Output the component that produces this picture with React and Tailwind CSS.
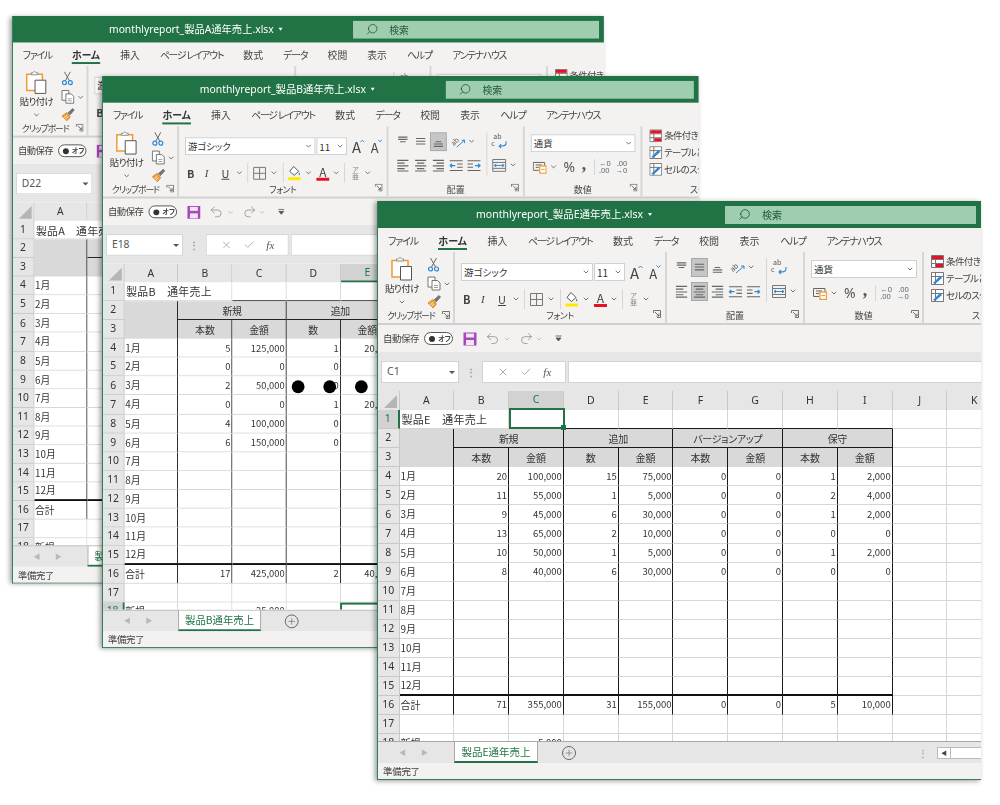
import { Search, Undo2, Redo2, X, Check, Plus, ChevronDown } from 'lucide-react';

const ribbonTabs = [
  { label: 'ファイル', cls: 'tracking-[-1.200px]' },
  { label: 'ホーム', cls: 'font-bold text-[#333]' },
  { label: '挿入', cls: '' },
  { label: 'ページ レイアウト', cls: 'tracking-[-1.200px]' },
  { label: '数式', cls: '' },
  { label: 'データ', cls: 'tracking-[-1px]' },
  { label: '校閲', cls: '' },
  { label: '表示', cls: '' },
  { label: 'ヘルプ', cls: 'tracking-[-1px]' },
  { label: 'アンテナハウス', cls: 'tracking-[-1.300px]' },
];
const columns = ['A', 'B', 'C', 'D', 'E', 'F', 'G', 'H', 'I', 'J', 'K'];
const months = ['1月', '2月', '3月', '4月', '5月', '6月', '7月', '8月', '9月', '10月', '11月', '12月'];

const sheetA = { title: '製品A　通年売上', rows: [], total: [], extra: [] };

const sheetB = {
  title: '製品B　通年売上',
  rows: [
    ['5', '125,000', '1', '20,000'],
    ['0', '0', '0', '0'],
    ['2', '50,000', '0', '0'],
    ['0', '0', '1', '20,000'],
    ['4', '100,000', '0', '0'],
    ['6', '150,000', '0', '0'],
  ],
  total: ['17', '425,000', '2', '40,000'],
  extra: ['', '25,000'],
};

const sheetE = {
  title: '製品E　通年売上',
  rows: [
    ['20', '100,000', '15', '75,000', '0', '0', '1', '2,000'],
    ['11', '55,000', '1', '5,000', '0', '0', '2', '4,000'],
    ['9', '45,000', '6', '30,000', '0', '0', '1', '2,000'],
    ['13', '65,000', '2', '10,000', '0', '0', '0', '0'],
    ['10', '50,000', '1', '5,000', '0', '0', '1', '2,000'],
    ['8', '40,000', '6', '30,000', '0', '0', '0', '0'],
  ],
  total: ['71', '355,000', '31', '155,000', '0', '0', '5', '10,000'],
  extra: ['', '5,000'],
};

function Chev({ className = 'mx-[3px]' }) {
  return <ChevronDown size={8} strokeWidth={2.4} className={`shrink-0 text-[#555] ${className}`} />;
}

function Launcher() {
  return (
    <svg width="8" height="8" viewBox="0 0 8 8" className="shrink-0">
      <path d="M.5 3V.5H7.5V7.5H4M2 2L6 6M6 3.5V6H3.5" fill="none" stroke="#666" strokeWidth=".9" />
    </svg>
  );
}

function Lines({ kind }) {
  const paths = {
    top: 'M3 3h10M3 5.500h10M5 8h6',
    middle: 'M3 4.500h10M3 7.500h10M3 10.500h10',
    bottom: 'M5 8h6M3 10.500h10M3 13h10',
    left: 'M2 2.500h12M2 5.500h8M2 8.500h12M2 11.500h8M2 14h12',
    center: 'M2 2.500h12M4 5.500h8M2 8.500h12M4 11.500h8M2 14h12',
    right: 'M2 2.500h12M6 5.500h8M2 8.500h12M6 11.500h8M2 14h12',
  };
  return (
    <svg width="15" height="15" viewBox="0 0 16 16" className="shrink-0">
      <path d={paths[kind]} stroke="#666" strokeWidth="1.200" fill="none" />
    </svg>
  );
}

function Indent({ flip }) {
  return (
    <svg width="15" height="15" viewBox="0 0 16 16" className={`shrink-0 ${flip ? '-scale-x-100' : ''}`}>
      <path d="M1 3h14M9 6.500h6M9 10h6M1 13.500h14" stroke="#666" strokeWidth="1.100" fill="none" />
      <path d="M7 8.200H1.500M3.500 6.200L1.500 8.200L3.500 10.200" stroke="#1f8fd8" strokeWidth="1.300" fill="none" />
    </svg>
  );
}

function AlignSlot({ on, kind }) {
  return (
    <span className={`flex h-[17px] w-[15px] items-center justify-center ${on ? 'bg-[#c6c6c6] ring-1 ring-[#a8a8a8]' : ''}`}>
      <Lines kind={kind} />
    </span>
  );
}

function Clipboard() {
  return (
    <svg width="24" height="24" viewBox="0 0 24 24" className="shrink-0">
      <path d="M2 3.500H18V20H2Z" fill="#fff" stroke="#ed9b33" strokeWidth="1.500" />
      <path d="M6.500 4V2H8.500C9 0 11 0 11.500 2H13.500V4Z" fill="#fff" stroke="#888" strokeWidth=".9" />
      <path d="M10.500 9.500H21.500V23H10.500Z" fill="#fff" stroke="#555" strokeWidth="1" />
    </svg>
  );
}

function Scissors() {
  return (
    <svg width="13" height="15" viewBox="0 0 13 15" className="shrink-0">
      <path d="M3.500 1L8.500 10M9.500 1L4.500 10" stroke="#666" strokeWidth="1" fill="none" />
      <circle cx="3.500" cy="12" r="2" fill="none" stroke="#2b88d8" strokeWidth="1.200" />
      <circle cx="9.500" cy="12" r="2" fill="none" stroke="#2b88d8" strokeWidth="1.200" />
    </svg>
  );
}

function CopyIcon() {
  return (
    <svg width="14" height="15" viewBox="0 0 14 15" className="shrink-0">
      <path d="M1 1H8V11H1Z" fill="#fff" stroke="#666" strokeWidth=".9" />
      <path d="M5 4.500H10.500L13 7V14H5Z" fill="#fff" stroke="#666" strokeWidth=".9" />
      <path d="M7 9.500H11M7 11.500H11" stroke="#888" strokeWidth=".8" />
    </svg>
  );
}

function Brush() {
  return (
    <svg width="15" height="15" viewBox="0 0 15 15" className="shrink-0">
      <path d="M1 9L6 5.500L9.500 10L6 14Z" fill="#f0a33c" stroke="#c9791b" strokeWidth=".7" />
      <path d="M7 6L12 1.500L13.500 3L9 8" fill="#777" stroke="#555" strokeWidth=".7" />
      <path d="M3 11L6 8.500M4.500 12.500L7 10" stroke="#fff" strokeWidth=".7" />
    </svg>
  );
}

function Borders() {
  return (
    <svg width="15" height="15" viewBox="0 0 15 15" className="shrink-0">
      <path d="M1.500 1.500H13.500V13.500H1.500ZM7.500 1.500V13.500M1.500 7.500H13.500" fill="none" stroke="#777" strokeWidth="1" />
    </svg>
  );
}

function FillColor() {
  return (
    <svg width="15" height="16" viewBox="0 0 15 16" className="shrink-0">
      <path d="M7 1.500L12 6.500L7.500 10.500L3 6.500Z" fill="#fff" stroke="#555" strokeWidth="1" />
      <path d="M12.500 7.500C13.500 9 13.800 10 12.700 10.500C11.600 10 11.800 9 12.500 7.500Z" fill="#2b88d8" />
      <rect x="1.500" y="12.500" width="12.500" height="3" fill="#ffe900" />
    </svg>
  );
}

function SmallSep({ className = 'mx-[3px]' }) {
  return <span className={`h-[20px] w-px shrink-0 bg-[#d6d6d6] ${className}`} />;
}

function Grow({ shrink }) {
  return (
    <span className="relative inline-block text-[15px] leading-none text-[#444]">
      <span className={shrink ? 'text-[13px]' : ''}>A</span>
      <svg width="5" height="4" viewBox="0 0 5 4" className="absolute -right-[4px] top-0">
        <path d={shrink ? 'M.5 .5L2.500 2.500L4.500 .5' : 'M.5 3L2.500 1L4.500 3'} stroke="#2b88d8" fill="none" />
      </svg>
    </span>
  );
}

function ClipboardGroup() {
  return (
    <div className="flex w-[77px] shrink-0 flex-col border-r-2 border-[#d6d6d6]">
      <div className="flex flex-1">
        <div className="flex w-[45px] flex-col items-center pl-[3px] pt-[5px]">
          <Clipboard />
          <span className="mt-[1px] whitespace-nowrap text-[9.500px] leading-[13px] tracking-[-.5px] text-[#333]">貼り付け</span>
          <Chev className="mt-[3px]" />
        </div>
        <div className="flex flex-col pl-[4px] pt-[5px]">
          <Scissors />
          <div className="mt-[4px] flex items-center">
            <CopyIcon />
            <Chev className="ml-[2px]" />
          </div>
          <div className="mt-[3px]">
            <Brush />
          </div>
        </div>
      </div>
      <div className="flex h-[14px] items-center pb-[2px] pl-[9px] pr-[3px]">
        <span className="flex-1 whitespace-nowrap text-[9px] leading-none tracking-[-1.100px] text-[#444]">クリップボード</span>
        <Launcher />
      </div>
    </div>
  );
}

function FontGroup() {
  return (
    <div className="flex w-[212px] shrink-0 flex-col border-r-2 border-[#d6d6d6]">
      <div className="flex flex-1 flex-col pl-[6px] pt-[8px]">
        <div className="flex items-center">
          <div className="flex h-[18px] w-[132px] items-center justify-between border border-[#d0d0d0] bg-white pl-[2px] pr-[2px] text-[9.500px] text-[#333]">
            游ゴシック
            <Chev className="" />
          </div>
          <div className="ml-[1px] flex h-[18px] w-[31px] items-center justify-between border border-[#d0d0d0] bg-white pl-[2px] pr-[2px] text-[10px] text-[#333]">
            11
            <Chev className="" />
          </div>
          <span className="ml-[5px]">
            <Grow />
          </span>
          <span className="ml-[10px]">
            <Grow shrink />
          </span>
        </div>
        <div className="mt-[6px] flex h-[18px] items-center text-[11px] text-[#444]">
          <span className="ml-[2px] w-[18px] font-bold">B</span>
          <span className="w-[17px] font-['Liberation_Serif',serif] italic">I</span>
          <span className="w-[12px] underline">U</span>
          <Chev className="ml-[2px]" />
          <SmallSep className="mx-[4px]" />
          <Borders />
          <Chev className="ml-[3px] mr-[2px]" />
          <SmallSep className="mx-[3px]" />
          <FillColor />
          <Chev className="ml-[3px]" />
          <span className="ml-[4px] flex h-[16px] w-[13px] flex-col items-center text-[12px] leading-[13px]">
            A
            <span className="h-[3px] w-[13px] bg-[#e81123]" />
          </span>
          <Chev className="ml-[3px]" />
          <SmallSep className="mx-[4px]" />
          <span className="ml-[3px] flex flex-col items-center text-[7px] leading-[7px] text-[#888]">
            <span>ア</span>
            <span>亜</span>
          </span>
          <Chev className="ml-[5px]" />
        </div>
      </div>
      <div className="relative flex h-[14px] items-center justify-center pb-[2px]">
        <span className="text-[9px] leading-none tracking-[-.5px] text-[#444]">フォント</span>
        <span className="absolute right-[4px] top-[1px]">
          <Launcher />
        </span>
      </div>
    </div>
  );
}

function AlignGroup({ sel }) {
  return (
    <div className="flex w-[138px] shrink-0 flex-col border-r-2 border-[#d6d6d6]">
      <div className="flex flex-1 pl-[7px] pt-[6px]">
        <div className="flex w-[87px] shrink-0 flex-col gap-[6px]">
          <div className="flex h-[18px] items-center gap-[3px]">
            <AlignSlot kind="top" />
            <AlignSlot kind="middle" on={sel === 'middle-center'} />
            <AlignSlot kind="bottom" on={sel === 'bottom'} />
            <span className="relative ml-[2px] flex h-[14px] w-[14px] shrink-0 items-center">
              <span className="-rotate-45 text-[7px] leading-none text-[#555]">ab</span>
              <svg width="10" height="10" viewBox="0 0 10 10" className="absolute bottom-0 left-[5px]">
                <path d="M1 9L9 2M6 2H9V5" stroke="#2b88d8" fill="none" />
              </svg>
            </span>
            <Chev className="" />
          </div>
          <div className="flex h-[18px] items-center gap-[3px]">
            <AlignSlot kind="left" />
            <AlignSlot kind="center" on={sel === 'middle-center'} />
            <AlignSlot kind="right" />
            <Indent />
            <Indent flip />
          </div>
        </div>
        <span className="ml-[5px] h-[44px] w-px bg-[#d6d6d6]" />
        <div className="ml-[4px] flex flex-col gap-[6px]">
          <div className="flex h-[18px] items-center">
            <span className="relative flex h-[16px] w-[16px] shrink-0 flex-col text-[7px] leading-[7px] text-[#555]">
              <span className="pl-[2px]">ab</span>
              <span>c</span>
              <svg width="10" height="8" viewBox="0 0 10 8" className="absolute bottom-0 right-0">
                <path d="M9 0V2C9 5 6 5 2 5M4 3L2 5L4 7" stroke="#2b88d8" strokeWidth="1.100" fill="none" />
              </svg>
            </span>
          </div>
          <div className="flex h-[18px] items-center">
            <svg width="16" height="15" viewBox="0 0 16 15" className="shrink-0">
              <path d="M1.500 1.500H14.500V13.500H1.500ZM1.500 4.500H14.500M1.500 10.500H14.500" fill="none" stroke="#777" />
              <path d="M3 7.500H13M5 6L3 7.500L5 9M11 6L13 7.500L11 9" stroke="#2b88d8" fill="none" />
            </svg>
            <Chev className="ml-[2px]" />
          </div>
        </div>
      </div>
      <div className="relative flex h-[14px] items-center justify-center pb-[2px]">
        <span className="text-[9px] leading-none text-[#444]">配置</span>
        <span className="absolute right-[4px] top-[1px]">
          <Launcher />
        </span>
      </div>
    </div>
  );
}

function NumberGroup() {
  return (
    <div className="flex w-[119px] shrink-0 flex-col border-r-2 border-[#d6d6d6]">
      <div className="flex flex-1 flex-col pl-[6px] pt-[8px]">
        <div className="flex h-[18px] w-[106px] items-center justify-between border border-[#d0d0d0] bg-white px-[2px] text-[9.500px] text-[#333]">
          通貨
          <Chev className="" />
        </div>
        <div className="mt-[6px] flex h-[18px] items-center text-[#555]">
          <svg width="14" height="14" viewBox="0 0 14 14" className="ml-[2px] shrink-0">
            <path d="M.5 2.500H12V6M.5 2.500V10.500H6M3 5H9M3 7.500H6" stroke="#666" fill="none" />
            <rect x="7" y="6" width="6.500" height="7.500" fill="#fff" stroke="#ed9b33" strokeWidth="1.300" />
            <path d="M8.500 9.500H12" stroke="#ed9b33" />
          </svg>
          <Chev className="ml-[3px]" />
          <span className="ml-[6px] font-['Noto_Sans',sans-serif] text-[14px] leading-none">%</span>
          <span className="ml-[7px] h-[14px] font-['Liberation_Serif',serif] text-[18px] font-bold leading-[8px]">,</span>
          <span className="ml-[8px] h-[16px] w-px bg-[#d6d6d6]" />
          <span className="ml-[4px] flex flex-col font-['Noto_Sans',sans-serif] text-[7.500px] leading-[7px] text-[#666]">
            <span>
              <span className="text-[#2b88d8]">←</span>0
            </span>
            <span>.00</span>
          </span>
          <span className="ml-[5px] flex flex-col text-right font-['Noto_Sans',sans-serif] text-[7.500px] leading-[7px] text-[#666]">
            <span>.00</span>
            <span>
              <span className="text-[#2b88d8]">→</span>0
            </span>
          </span>
        </div>
      </div>
      <div className="relative flex h-[14px] items-center justify-center pb-[2px]">
        <span className="text-[9px] leading-none text-[#444]">数値</span>
        <span className="absolute right-[3px] top-[1px]">
          <Launcher />
        </span>
      </div>
    </div>
  );
}

function StyleIcon({ kind }) {
  if (kind === 0) {
    return (
      <svg width="13" height="13" viewBox="0 0 13 13" className="shrink-0">
        <path d="M.5 .5H12.500V12.500H.5ZM.5 4.500H12.500M.5 8.500H12.500M4.500 .5V12.500" fill="#fff" stroke="#777" />
        <rect x="1" y="1" width="11" height="3" fill="#e81123" />
        <rect x="5" y="9" width="7" height="3" fill="#e81123" />
      </svg>
    );
  }
  return (
    <svg width="13" height="13" viewBox="0 0 13 13" className="shrink-0">
      <path d="M.5 .5H12.500V12.500H.5ZM.5 4.500H12.500M4.500 .5V12.500" fill="#fff" stroke="#777" />
      <path d="M2 11L9 4L11 6L4 12Z" fill="#2b88d8" />
    </svg>
  );
}

function StylesGroup() {
  return (
    <div className="flex min-w-0 flex-1 flex-col overflow-hidden">
      <div className="flex flex-1 flex-col gap-[4px] whitespace-nowrap pl-[7px] pt-[3px] text-[9.500px] leading-[13px] tracking-[-.6px] text-[#444]">
        <div className="flex items-center gap-[2px]">
          <StyleIcon kind={0} />
          条件付き書式
        </div>
        <div className="flex items-center gap-[2px]">
          <StyleIcon kind={1} />
          テーブルとして書式設定
        </div>
        <div className="flex items-center gap-[2px]">
          <StyleIcon kind={2} />
          セルのスタイル
        </div>
      </div>
      <div className="flex h-[14px] items-center pb-[2px] pl-[48px]">
        <span className="whitespace-nowrap text-[9px] leading-none text-[#444]">スタイル</span>
      </div>
    </div>
  );
}

function SaveIcon() {
  return (
    <svg width="14" height="14" viewBox="0 0 14 14" className="shrink-0">
      <path d="M.5 .5H13.500V13.500H.5Z" fill="#a548b8" />
      <rect x="3" y="1.500" width="8" height="4" fill="#f4e4f7" />
      <rect x="3" y="8" width="8" height="5" fill="#f4e4f7" />
    </svg>
  );
}

function QuickAccess() {
  return (
    <div className="flex h-[27px] shrink-0 items-center pl-[5px] text-[#444]">
      <span className="whitespace-nowrap text-[9.500px] tracking-[-.5px]">自動保存</span>
      <div className="ml-[5px] flex h-[13px] w-[29px] shrink-0 items-center rounded-full border border-[#555] bg-white pl-[4px]">
        <span className="h-[6px] w-[6px] rounded-full bg-[#333]" />
        <span className="ml-[3px] whitespace-nowrap text-[7px] font-bold leading-none">オフ</span>
      </div>
      <span className="ml-[10px]">
        <SaveIcon />
      </span>
      <Undo2 size={15} strokeWidth={1.200} className="ml-[8px] text-[#8a8a8a]" />
      <Chev className="ml-[3px] opacity-40" />
      <Redo2 size={15} strokeWidth={1.200} className="ml-[8px] text-[#8a8a8a]" />
      <Chev className="ml-[1px] opacity-40" />
      <svg width="7" height="7" viewBox="0 0 7 7" className="ml-[12px] shrink-0">
        <path d="M.5 1H6.500M1 3L3.500 6L6 3Z" stroke="#555" fill="#555" strokeWidth=".8" />
      </svg>
    </div>
  );
}

function FormulaBar({ cellRef }) {
  return (
    <div className="flex h-[39px] shrink-0 bg-[#e6e6e6] pl-[3px] pt-[9px]">
      <div className="flex h-[22px] w-[78px] items-center justify-between border border-[#d4d4d4] bg-white pl-[5px] pr-[3px] font-['Noto_Sans',sans-serif] text-[10.500px] text-[#555]">
        {cellRef}
        <span className="h-0 w-0 border-x-[3px] border-t-[3px] border-x-transparent border-t-[#555]" />
      </div>
      <span className="flex h-[22px] w-[23px] items-center justify-center pb-[2px] text-[10px] font-bold text-[#999]">⋮</span>
      <div className="flex h-[22px] w-[84px] items-center justify-around border border-[#d4d4d4] bg-white px-[8px] text-[#b0b0b0]">
        <X size={12} />
        <Check size={12} />
        <span className="font-['Liberation_Serif',serif] text-[11px] italic text-[#555]">fx</span>
      </div>
      <div className="ml-[2px] h-[22px] flex-1 border-y border-l border-[#d4d4d4] bg-white" />
    </div>
  );
}

function dataCell(sheet, r, c) {
  if (r >= 4 && r <= 15) {
    if (c === 0) return months[r - 4];
    const row = sheet.rows[r - 4];
    return row ? row[c - 1] : '';
  }
  if (r === 16) return c === 0 ? '合計' : sheet.total[c - 1];
  if (r === 18) return c === 0 ? '新規' : sheet.extra[c - 1];
  return '';
}

function GridCell({ r, c, value }) {
  const inTable = r >= 2 && r <= 16 && c <= 8;
  const right = inTable ? 'border-r-[#1a1a1a]' : 'border-r-[#d6d6d6]';
  let bottom = 'border-b border-b-[#d6d6d6]';
  if (r === 15 && c <= 8) bottom = 'border-b-2 border-b-[#111]';
  if (r === 1 && c >= 1 && c <= 8) bottom = 'border-b border-b-[#1a1a1a]';
  const align = c === 0 ? 'justify-start pl-[1px] text-[10px]' : 'justify-end pr-[1px] text-[9.500px]';
  return (
    <div className={`flex items-center overflow-hidden whitespace-nowrap border-r bg-white leading-none text-[#333] ${right} ${bottom} ${align}`}>
      {value}
    </div>
  );
}

function Sheet({ sheet, selCol, selRow, dots }) {
  const colHead = ['', ...columns];
  return (
    <div className="relative min-h-0 flex-1 overflow-hidden bg-white">
      <div className="grid grid-cols-[21.500px_repeat(11,54.800px)] auto-rows-[19.070px] text-[#333]">
        {colHead.map((h, i) =>
          i === 0 ? (
            <div key="corner" className="flex items-end justify-end border-r border-[#c8c8c8] bg-[#e6e6e6] p-[2px]">
              <span className="h-0 w-0 border-b-[13px] border-l-[13px] border-b-[#b5b5b5] border-l-transparent" />
            </div>
          ) : (
            <div
              key={h}
              className={`flex items-center justify-center border-r border-[#c8c8c8] font-['Noto_Sans',sans-serif] text-[10.500px] ${
                h === selCol ? 'border-b-2 border-b-[#217346] bg-[#d2d2d2] text-[#217346]' : 'bg-[#e6e6e6]'
              }`}
            >
              {h}
            </div>
          )
        )}

        {Array.from({ length: 18 }, (_, idx) => idx + 1).map((r) => {
          const cells = [
            <div
              key={`h${r}`}
              className={`flex items-center justify-center border-b border-[#c8c8c8] font-['Noto_Sans',sans-serif] text-[10.500px] ${
                r === selRow ? 'border-r-2 border-r-[#217346] bg-[#d2d2d2] text-[#217346]' : 'border-r bg-[#e6e6e6]'
              }`}
            >
              {r}
            </div>,
          ];

          if (r === 1) {
            cells.push(
              <div key="title" className="col-span-2 flex items-center whitespace-nowrap border-b border-r border-b-[#d6d6d6] border-r-[#d6d6d6] bg-white pl-[2px] text-[11px] tracking-[.3px] text-[#333]">
                {sheet.title}
              </div>
            );
            columns.slice(2).forEach((_, i) => cells.push(<GridCell key={`1-${i}`} r={1} c={i + 2} value="" />));
            return cells;
          }

          if (r === 2) {
            cells.push(<div key="a2" className="row-span-2 border-r border-r-[#1a1a1a] bg-[#d9d9d9]" />);
            ['新規', '追加', 'バージョンアップ', '保守'].forEach((label) =>
              cells.push(
                <div key={label} className="col-span-2 flex items-center justify-center border-b border-r border-[#1a1a1a] bg-[#d9d9d9] text-[10px] tracking-[-.3px]">
                  {label}
                </div>
              )
            );
            cells.push(<GridCell key="j2" r={2} c={9} value="" />, <GridCell key="k2" r={2} c={10} value="" />);
            return cells;
          }

          if (r === 3) {
            ['本数', '金額', '数', '金額', '本数', '金額', '本数', '金額'].forEach((label, i) =>
              cells.push(
                <div key={`s${i}`} className="flex items-center justify-center border-r border-[#1a1a1a] bg-[#d9d9d9] text-[10px]">
                  {label}
                </div>
              )
            );
            cells.push(<GridCell key="j3" r={3} c={9} value="" />, <GridCell key="k3" r={3} c={10} value="" />);
            return cells;
          }

          columns.forEach((_, c) => cells.push(<GridCell key={`${r}-${c}`} r={r} c={c} value={dataCell(sheet, r, c)} />));
          return cells;
        })}
      </div>

      {/* selected cell outline */}
      {selRow === 1 && (
        <div className="absolute left-[130.600px] top-[17px] h-[21px] w-[56px] border-2 border-[#217346]">
          <span className="absolute -bottom-[3px] -right-[3px] h-[5px] w-[5px] bg-[#217346]" />
        </div>
      )}
      {selRow === 18 && <div className="absolute left-[240px] top-[343px] h-[21px] w-[56px] border-2 border-[#217346]" />}

      {/* blacked out values */}
      {dots &&
        dots.map((left) => (
          <span key={left} className="absolute top-[118px] h-[13px] w-[13px] rounded-full bg-black" style={{ left }} />
        ))}
    </div>
  );
}

function SheetTabs({ name }) {
  return (
    <div className="flex h-[22px] shrink-0 items-stretch border-t border-[#a8a8a8] bg-[#e6e6e6] text-[#b8b8b8]">
      <div className="flex w-[76px] items-center pl-[21px] text-[7px]">
        <span>◀</span>
        <span className="ml-[15px]">▶</span>
      </div>
      <div className="-mt-px flex w-[84px] items-center justify-center border-x border-t border-[#a8a8a8] border-b-2 border-b-[#217346] bg-white text-[10.500px] text-[#217346]">
        {name}
      </div>
      <div className="ml-[24px] flex items-center">
        <span className="flex h-[14px] w-[14px] items-center justify-center rounded-full border border-[#666] text-[#666]">
          <Plus size={10} strokeWidth={1.500} />
        </span>
      </div>
      <div className="ml-auto flex items-center">
        <span className="text-[10px] font-bold text-[#aaa]">⋮</span>
        <span className="ml-[9px] flex h-[12px] w-[14px] items-center justify-center border border-[#bbb] bg-white text-[6px] text-[#444]">◀</span>
        <span className="h-[12px] w-[30px] border-y border-[#bbb] bg-white" />
      </div>
    </div>
  );
}

function ExcelWindow({ file, tabName, cellRef, sheet, selCol, selRow, dots, alignSel, className }) {
  return (
    <div className={`absolute flex h-[579px] w-[604px] origin-top-left flex-col overflow-hidden border-b-[1.500px] border-l-[1.500px] border-[#2f8059] bg-[#f3f2f1] shadow-[-2px_1px_5px_rgba(0,0,0,0.4)] ${className}`}>
      {/* タイトルバー */}
      <div className="flex h-[27px] shrink-0 items-center bg-[#217346] text-white">
        <span className="ml-[98px] whitespace-nowrap font-['Noto_Sans','Noto_Sans_CJK_JP',sans-serif] text-[10.500px]">{file}</span>
        <span className="ml-[5px] h-0 w-0 border-x-[2.500px] border-t-[3px] border-x-transparent border-t-white" />
        <div className="ml-auto mr-[5px] flex h-[18px] w-[251px] items-center bg-[#9fcdb0] pl-[13px] text-[#1f5a38]">
          <Search size={13} strokeWidth={1.500} className="-scale-x-100" />
          <span className="ml-[11px] text-[10px]">検索</span>
        </div>
      </div>

      {/* タブ */}
      <div className="flex h-[24px] shrink-0 items-center gap-[20.500px] pl-[10px] text-[10px] text-[#444]">
        {ribbonTabs.map((t) =>
          t.label === 'ホーム' ? (
            <span key={t.label} className={`relative whitespace-nowrap ${t.cls}`}>
              {t.label}
              <span className="absolute -bottom-[2px] left-0 h-[2px] w-full bg-[#217346]" />
            </span>
          ) : (
            <span key={t.label} className={`whitespace-nowrap ${t.cls}`}>
              {t.label}
            </span>
          )
        )}
      </div>

      {/* リボン */}
      <div className="flex h-[73px] shrink-0 border-b-2 border-[#d0d0d0]">
        <ClipboardGroup />
        <FontGroup />
        <AlignGroup sel={alignSel} />
        <NumberGroup />
        <StylesGroup />
      </div>

      <QuickAccess />
      <FormulaBar cellRef={cellRef} />
      <Sheet sheet={sheet} selCol={selCol} selRow={selRow} dots={dots} />
      <SheetTabs name={tabName} />

      <div className="flex h-[16px] shrink-0 items-center bg-[#f3f2f1] pl-[5px] text-[9.500px] tracking-[-.3px] text-[#444]">準備完了</div>
    </div>
  );
}

export default function App() {
  return (
    <div className="relative h-[805px] w-[1000px] overflow-hidden bg-white font-['Noto_Sans_CJK_JP',sans-serif] [font-feature-settings:'palt']">
      <ExcelWindow
        className="left-[12px] top-[16px] scale-[0.98]"
        file="monthlyreport_製品A通年売上.xlsx"
        tabName="製品A通年売上"
        cellRef="D22"
        sheet={sheetA}
      />
      <ExcelWindow
        className="left-[102px] top-[76px] scale-[0.988]"
        file="monthlyreport_製品B通年売上.xlsx"
        tabName="製品B通年売上"
        cellRef="E18"
        sheet={sheetB}
        selCol="E"
        selRow={18}
        dots={[191, 223, 255]}
        alignSel="bottom"
      />
      <ExcelWindow
        className="left-[377px] top-[201px]"
        file="monthlyreport_製品E通年売上.xlsx"
        tabName="製品E通年売上"
        cellRef="C1"
        sheet={sheetE}
        selCol="C"
        selRow={1}
        alignSel="middle-center"
      />
    </div>
  );
}
